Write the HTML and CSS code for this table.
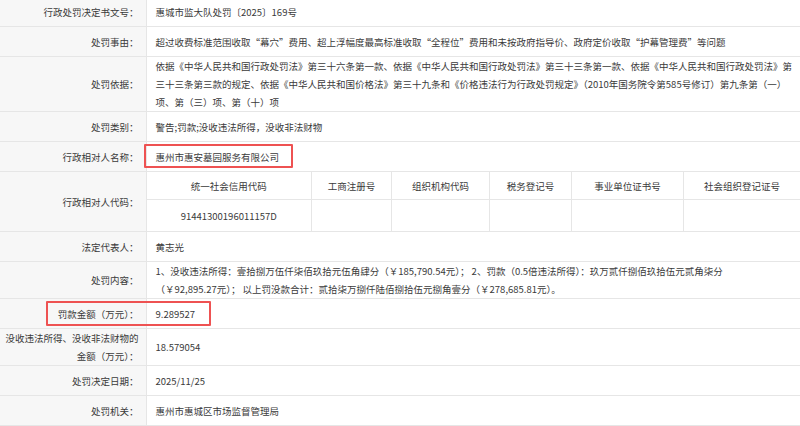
FILE: index.html
```html
<!DOCTYPE html>
<html lang="zh-CN">
<head>
  <meta charset="UTF-8" />
  <meta name="viewport" content="width=device-width, initial-scale=1" />
  <title>行政处罚信息</title>
  <link rel="stylesheet" href="styles.css">
</head>
<body>
  <table class="detail">
    <colgroup>
      <col class="col-label">
      <col>
    </colgroup>
    <tr>
      <th>行政处罚决定书文号：</th>
      <td>惠城市监大队处罚〔2025〕169号</td>
    </tr>
    <tr>
      <th>处罚事由：</th>
      <td>超过收费标准范围收取“幕穴”费用、超上浮幅度最高标准收取“全程位”费用和未按政府指导价、政府定价收取“护幕管理费”等问题</td>
    </tr>
    <tr>
      <th>处罚依据：</th>
      <td class="lines">依据《中华人民共和国行政处罚法》第三十六条第一款、依据《中华人民共和国行政处罚法》第三十三条第一款、依据《中华人民共和国行政处罚法》第<br>三十三条第三款的规定、依据《中华人民共和国价格法》第三十九条和《价格违法行为行政处罚规定》（2010年国务院令第585号修订）第九条第（一）<br>项、第（三）项、第（十）项</td>
    </tr>
    <tr>
      <th>处罚类别：</th>
      <td>警告;罚款;没收违法所得，没收非法财物</td>
    </tr>
    <tr>
      <th>行政相对人名称：</th>
      <td><span class="mark mark-name">惠州市惠安墓园服务有限公司</span></td>
    </tr>
    <tr>
      <th>行政相对人代码：</th>
      <td class="codes-cell">
        <table class="codes">
          <colgroup>
            <col class="c1"><col class="c2"><col class="c3"><col class="c4"><col class="c5"><col>
          </colgroup>
          <tr class="codes-head">
            <td>统一社会信用代码</td>
            <td>工商注册号</td>
            <td>组织机构代码</td>
            <td>税务登记号</td>
            <td>事业单位证书号</td>
            <td>社会组织登记证号</td>
          </tr>
          <tr>
            <td>91441300196011157D</td>
            <td></td>
            <td></td>
            <td></td>
            <td></td>
            <td></td>
          </tr>
        </table>
      </td>
    </tr>
    <tr>
      <th>法定代表人：</th>
      <td>黄志光</td>
    </tr>
    <tr>
      <th>处罚内容：</th>
      <td class="lines">1、没收违法所得：壹拾捌万伍仟柒佰玖拾元伍角肆分（￥185,790.54元）； 2、罚款（0.5倍违法所得）：玖万贰仟捌佰玖拾伍元贰角柒分<br>（￥92,895.27元）； 以上罚没款合计：贰拾柒万捌仟陆佰捌拾伍元捌角壹分（￥278,685.81元）。</td>
    </tr>
    <tr>
      <th><span class="mark mark-fine">罚款金额（万元）：</span></th>
      <td>9.289527</td>
    </tr>
    <tr>
      <th class="two-line">没收违法所得、没收非法财物的<br>金额（万元）：</th>
      <td>18.579054</td>
    </tr>
    <tr>
      <th>处罚决定日期：</th>
      <td>2025/11/25</td>
    </tr>
    <tr>
      <th>处罚机关：</th>
      <td>惠州市惠城区市场监督管理局</td>
    </tr>
  </table>
</body>
</html>
```

FILE: styles.css
```css
body {
  margin: 0;
  font-family: "Noto Sans CJK SC", "Noto Sans", sans-serif;
  font-size: 9.5px;
  color: #3a3a3a;
  background-color: #fff;
  overflow: hidden;
}

.detail {
  width: 800px;
  border-collapse: collapse;
  table-layout: fixed;
  margin-top: -4px;
}

.col-label {
  width: 146px;
}

.detail th,
.detail td {
  border: 1px solid #e6e6e6;
  height: 27px;
  padding: 1px 4px 1px 9px;
  line-height: 18px;
  vertical-align: middle;
  text-align: left;
  font-weight: normal;
}

.detail th {
  background-color: #f7f7f7;
  text-align: right;
  padding: 1px 7px 1px 0;
  white-space: nowrap;
  border-left: none;
}

.detail td {
  border-right: none;
}

.detail td.lines {
  white-space: nowrap;
  overflow: hidden;
  padding-top: 0;
  padding-bottom: 0;
}

.detail th.two-line {
  padding-top: 0;
  padding-bottom: 0;
}

/* tabla interna de códigos */
.detail td.codes-cell {
  padding: 0;
}

.codes {
  width: 100%;
  border-collapse: collapse;
  table-layout: fixed;
}

.codes .c1 { width: 165px; }
.codes .c2 { width: 80px; }
.codes .c3 { width: 98px; }
.codes .c4 { width: 82px; }
.codes .c5 { width: 112px; }

.codes td {
  border: none;
  border-left: 1px solid #e6e6e6;
  height: 31px;
  padding: 0;
  text-align: center;
}

.codes td:first-child {
  border-left: none;
}

.codes .codes-head td {
  height: 27px;
  border-bottom: 1px solid #e6e6e6;
}

/* recuadros rojos */
.mark {
  position: relative;
  display: inline-block;
  vertical-align: top;
  line-height: 18px;
}

.mark::before {
  content: "";
  position: absolute;
  border: 2px solid #ee5252;
  border-radius: 1px;
}

.mark-name::before {
  left: -12px;
  right: -14px;
  top: -4px;
  bottom: -2px;
}

.mark-fine::before {
  left: -12px;
  right: -72px;
  top: -4px;
  bottom: -3px;
}
```
